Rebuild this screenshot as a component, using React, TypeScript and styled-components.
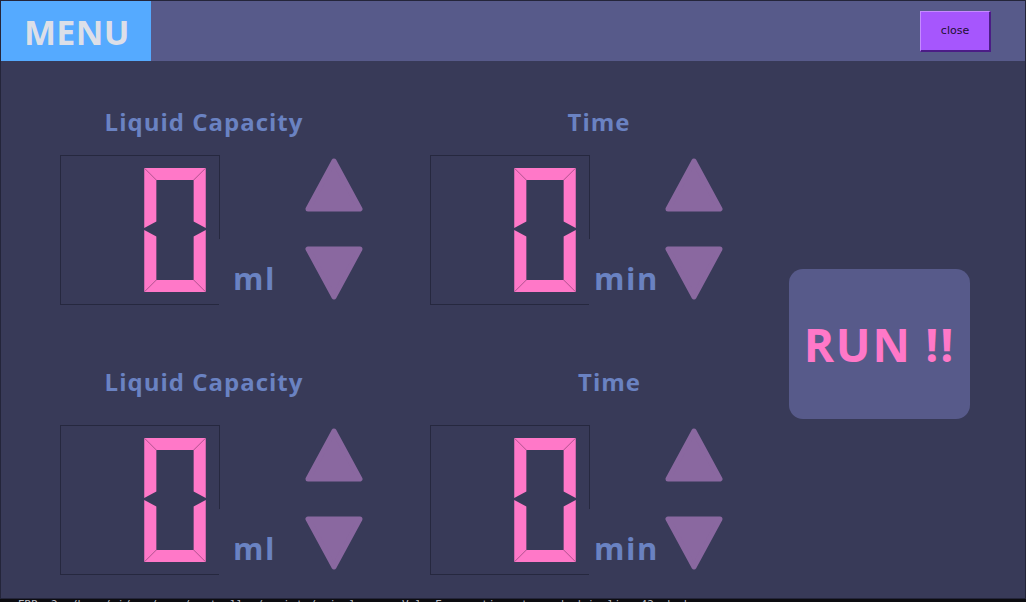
import React from "react";
import styled, { createGlobalStyle } from "styled-components";

const Global = createGlobalStyle`
  html, body { margin: 0; padding: 0; background: #000; }
  body { width: 1026px; height: 602px; overflow: hidden; font-family: "Open Sans", "Noto Sans", sans-serif; }
`;

const Frame = styled.div`
  width: 1026px;
  height: 602px;
  display: flex;
  flex-direction: column;
  background: #0c0c10;
`;

const Window = styled.div`
  box-sizing: border-box;
  height: 599px;
  border: 1px solid #24253a;
  background: #383a58;
  display: flex;
  flex-direction: column;
`;

const Header = styled.div`
  height: 60px;
  background: #575a8a;
  display: flex;
  align-items: center;
  flex-shrink: 0;
`;

const MenuTab = styled.div`
  width: 150px;
  height: 60px;
  background: #55aaff;
  color: #dcdfe8;
  font-weight: 700;
  font-size: 34px;
  line-height: 62px;
  padding-left: 23px;
  box-sizing: border-box;
  letter-spacing: 0.3px;
`;

const CloseButton = styled.button`
  margin-left: auto;
  margin-right: 34px;
  width: 71px;
  height: 41px;
  box-sizing: border-box;
  background: #a656fd;
  border-style: solid;
  border-width: 1px 2px 2px 1px;
  border-color: #c58bff #4b1c86 #4b1c86 #c58bff;
  color: #1c1030;
  font-family: "DejaVu Sans", sans-serif;
  font-size: 11px;
  padding: 0;
  cursor: pointer;
`;

const Main = styled.div`
  flex: 1;
  display: flex;
  align-items: flex-start;
  padding-left: 59px;
  padding-top: 43px;
`;

const Grid = styled.div`
  display: grid;
  grid-template-columns: 370px 300px;
  align-content: start;
  row-gap: 59px;
`;

const Panel = styled.div`
  display: flex;
  flex-direction: column;
`;

const Title = styled.div<{ $w: number; $gap: number }>`
  width: ${(p) => p.$w}px;
  height: 30px;
  line-height: 35px;
  text-align: center;
  font-size: 24px;
  letter-spacing: 1px;
  font-weight: 700;
  color: #6a82c2;
  white-space: nowrap;
  margin-bottom: ${(p) => p.$gap}px;
`;

const Row = styled.div`
  display: flex;
  align-items: flex-start;
`;

const DisplayBox = styled.div`
  box-sizing: border-box;
  width: 160px;
  height: 150px;
  border: 1px solid #26283f;
  display: flex;
  justify-content: flex-end;
  align-items: flex-start;
  padding: 12px 13px 0 0;
  flex-shrink: 0;
`;

const Unit = styled.div<{ $w: number; $pad: number }>`
  align-self: flex-end;
  margin-left: -1px;
  width: ${(p) => p.$w}px;
  height: 66px;
  box-sizing: border-box;
  background: #383a58;
  padding-left: ${(p) => p.$pad}px;
  padding-bottom: 13px;
  display: flex;
  align-items: flex-end;
  font-size: 31px;
  line-height: 28px;
  letter-spacing: 1.5px;
  font-weight: 700;
  color: #6a82c2;
  flex-shrink: 0;
`;

const Arrows = styled.div`
  display: flex;
  flex-direction: column;
  gap: 34px;
  padding-top: 3px;
`;

const ArrowButton = styled.button`
  width: 58px;
  height: 54px;
  padding: 0;
  border: none;
  background: transparent;
  cursor: pointer;
  display: block;
  svg { display: block; }
`;

const RunButton = styled.button`
  margin-left: 59px;
  margin-top: 165px;
  width: 181px;
  height: 150px;
  border: none;
  border-radius: 14px;
  background: #575a8a;
  color: #ff78c8;
  font-family: "Open Sans", "Noto Sans", sans-serif;
  font-size: 46px;
  letter-spacing: 1.8px;
  font-weight: 700;
  padding: 0;
  cursor: pointer;
`;

const Footer = styled.div`
  flex: 1;
  overflow: hidden;
  background: #0c0c10;
  color: #b8b8c0;
  font-family: "DejaVu Sans Mono", monospace;
  font-size: 11px;
  line-height: 11px;
  padding-left: 18px;
  white-space: nowrap;
`;

const SEG = "#ff78c8";
const SEG_LINE = "#b8528f";

const Digit: React.FC = () => (
  <svg width="62" height="124" viewBox="0 0 61 123">
    <g fill={SEG}>
      <polygon points="0,0 61,0 49,12 12,12" />
      <polygon points="0,123 61,123 49,111 12,111" />
      <polygon points="0,0 12,12 12,53 0,59.5" />
      <polygon points="0,61.5 12,68 12,111 0,123" />
      <polygon points="61,0 49,12 49,53 61,59.5" />
      <polygon points="61,61.5 49,68 49,111 61,123" />
    </g>
    <g stroke={SEG_LINE} strokeWidth="0.8">
      <line x1="0.5" y1="0.5" x2="12" y2="12" />
      <line x1="60.5" y1="0.5" x2="49" y2="12" />
      <line x1="0.5" y1="122.5" x2="12" y2="111" />
      <line x1="60.5" y1="122.5" x2="49" y2="111" />
    </g>
  </svg>
);

const Triangle: React.FC<{ down?: boolean }> = ({ down }) => (
  <svg width="58" height="54" viewBox="0 0 58 54">
    <polygon
      points={down ? "3,3 55,3 29,51" : "29,3 55,51 3,51"}
      fill="#8a68a0"
      stroke="#8a68a0"
      strokeWidth="5"
      strokeLinejoin="round"
    />
  </svg>
);

type PanelProps = {
  title: string;
  titleW: number;
  titleGap: number;
  unit: string;
  unitW: number;
  unitPad: number;
};

const Control: React.FC<PanelProps> = ({ title, titleW, titleGap, unit, unitW, unitPad }) => (
  <Panel>
    <Title $w={titleW} $gap={titleGap}>{title}</Title>
    <Row>
      <DisplayBox>
        <Digit />
      </DisplayBox>
      <Unit $w={unitW} $pad={unitPad}>{unit}</Unit>
      <Arrows>
        <ArrowButton aria-label="up">
          <Triangle />
        </ArrowButton>
        <ArrowButton aria-label="down">
          <Triangle down />
        </ArrowButton>
      </Arrows>
    </Row>
  </Panel>
);

export default function App() {
  return (
    <>
      <Global />
      <Frame>
        <Window>
          <Header>
            <MenuTab>MENU</MenuTab>
            <CloseButton>close</CloseButton>
          </Header>
          <Main>
            <Grid>
              <Control title="Liquid Capacity" titleW={288} titleGap={21} unit="ml" unitW={86} unitPad={14} />
              <Control title="Time" titleW={338} titleGap={21} unit="min" unitW={76} unitPad={5} />
              <Control title="Liquid Capacity" titleW={288} titleGap={31} unit="ml" unitW={86} unitPad={14} />
              <Control title="Time" titleW={359} titleGap={31} unit="min" unitW={76} unitPad={5} />
            </Grid>
            <RunButton>RUN !!</RunButton>
          </Main>
        </Window>
        <Footer>
          ERR: 2 ./home/pi/www/pump/controller/scripts/main_loop.py   ValueError: timeout reached in   line 42   ok   done
        </Footer>
      </Frame>
    </>
  );
}
